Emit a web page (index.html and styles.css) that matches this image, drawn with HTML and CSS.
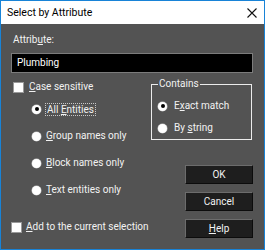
FILE: index.html
```html
<!DOCTYPE html>
<html>
<head>
<meta charset="utf-8">
<link rel="stylesheet" href="styles.css">
</head>
<body>
<div class="window">
  <div class="titlebar">
    <span class="title">Select by Attribute</span>
    <svg class="close" width="10" height="10" viewBox="0 0 10 10"><path d="M0.5 0.5 L9.5 9.5 M9.5 0.5 L0.5 9.5" stroke="#111" stroke-width="1.1" fill="none"/></svg>
  </div>
  <div class="content">
    <div class="field-label">Attrib<u>u</u>te:</div>
    <div class="input">Plumbing</div>
    <div class="columns">
      <div class="left">
        <div class="row case"><span class="checkbox"></span><span><u>C</u>ase sensitive</span></div>
        <div class="radio-list">
          <div class="row"><span class="radio checked"></span><span class="focus">All <u>E</u>ntities</span></div>
          <div class="row"><span class="radio"></span><span class="lbl"><u>G</u>roup names only</span></div>
          <div class="row"><span class="radio"></span><span class="lbl"><u>B</u>lock names only</span></div>
          <div class="row"><span class="radio"></span><span class="lbl"><u>T</u>ext entities only</span></div>
        </div>
        <div class="row add"><span class="checkbox"></span><span><u>A</u>dd to the current selection</span></div>
      </div>
      <div class="right">
        <fieldset class="group">
          <legend>Contains</legend>
          <div class="row"><span class="radio checked"></span><span class="lbl">E<u>x</u>act match</span></div>
          <div class="row"><span class="radio"></span><span class="lbl">By <u>s</u>tring</span></div>
        </fieldset>
        <div class="buttons">
          <button class="btn">OK</button>
          <button class="btn">Cancel</button>
          <button class="btn"><u>H</u>elp</button>
        </div>
      </div>
    </div>
  </div>
</div>
</body>
</html>
```
FILE: styles.css
```css
* { box-sizing: border-box; }
html, body { margin: 0; padding: 0; }
body {
  width: 265px;
  height: 250px;
  font-family: Roboto, "Liberation Sans", sans-serif;
  font-size: 10px;
}
.window {
  width: 265px;
  height: 250px;
  border: 1px solid #1883d7;
  display: flex;
  flex-direction: column;
}
.titlebar {
  height: 23px;
  background: #fff;
  display: flex;
  align-items: center;
  justify-content: space-between;
  padding: 0 7px 0 6px;
  color: #000;
  font-size: 10.5px;
}
.close { display: block; margin-top: 1px; }
.content {
  flex: 1;
  background: #535353;
  color: #f2f2f2;
  padding: 9px 11px 0 10px;
  display: flex;
  flex-direction: column;
}
.field-label {
  line-height: 14px;
  padding-left: 2px;
}
.input {
  margin-top: 6px;
  height: 20px;
  background: #000;
  border: 1px solid #7c7c7c;
  color: #fff;
  padding-left: 5px;
  line-height: 18px;
}
.columns {
  display: flex;
  justify-content: space-between;
}
.left {
  width: 141px;
  display: flex;
  flex-direction: column;
}
.row {
  display: flex;
  align-items: center;
  height: 14px;
  line-height: 14px;
  white-space: nowrap;
}
.case { margin-top: 7px; padding-left: 2px; }
.case .checkbox { margin-right: 5px; }
.radio-list {
  margin-top: 8px;
  padding-left: 21px;
  display: flex;
  flex-direction: column;
  gap: 13px;
}
.add { margin-top: 23px; padding-left: 0; }
.add .checkbox { margin-right: 4px; }
.checkbox {
  width: 11px;
  height: 11px;
  background: #fff;
  border: 1px solid #9a9a9a;
  flex: none;
}
.radio {
  width: 9px;
  height: 9px;
  border-radius: 50%;
  background: #fff;
  box-shadow: 0 0 0 0.5px #bbb;
  flex: none;
  margin-right: 4px;
  display: flex;
  align-items: center;
  justify-content: center;
}
.radio.checked::after {
  content: "";
  width: 4px;
  height: 4px;
  border-radius: 50%;
  background: #000;
}
.focus {
  outline: 1px dotted #c8c8c8;
  padding: 0 1px;
  line-height: 11px;
  margin-left: 1px;
}
.lbl { margin-left: 1px; }
.right {
  width: 102px;
  display: flex;
  flex-direction: column;
  align-items: flex-end;
}
.group {
  margin: 4px 1px 0 0;
  width: 101px;
  border: 1px solid #ececec;
  padding: 8px 5px 4px 6px;
  display: flex;
  flex-direction: column;
  gap: 8px;
}
.group legend {
  padding: 0 1px;
  margin-left: 0;
  line-height: 14px;
}
.group .radio { margin-right: 6px; }
.buttons {
  margin-top: 25px;
  display: flex;
  flex-direction: column;
  gap: 8px;
}
.btn {
  width: 68px;
  height: 19px;
  background: #1e1e1e;
  color: #f2f2f2;
  border: 1px solid;
  border-color: #6c6c6c #0c0c0c #0c0c0c #6c6c6c;
  font-family: Roboto, "Liberation Sans", sans-serif;
  font-size: 10px;
  padding: 0;
  line-height: 17px;
}
u { text-decoration: underline; text-underline-offset: 1px; }
```
